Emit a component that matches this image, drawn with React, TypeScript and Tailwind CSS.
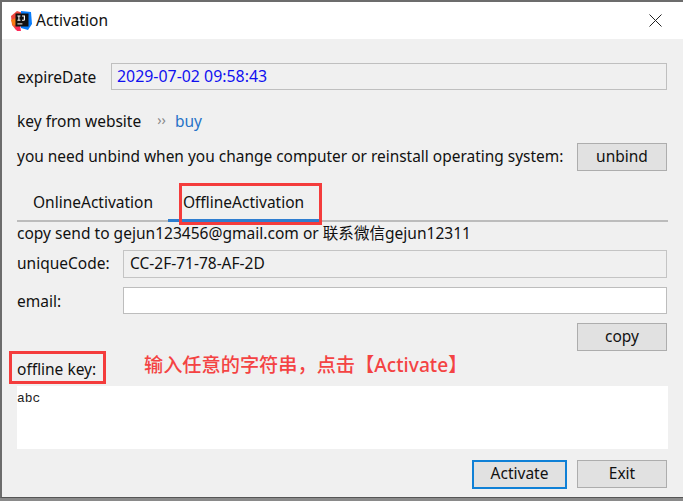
const font = { fontFamily: '"Noto Sans", "Noto Sans CJK SC", sans-serif' };

function IdeaLogo() {
  return (
    <svg width="22" height="22" viewBox="0 0 22 22" className="shrink-0">
      <path d="M0 6 L6 1 L12 3 L10 14 L5 20 L1 15 Z" fill="#f0483e" />
      <path d="M0 10 L5 8 L6 14 L2 16 Z" fill="#f97a12" />
      <path d="M10 1 L20 2 L21 14 L17 20 L10 18 Z" fill="#087cfa" />
      <path d="M4 18 L9 15 L10 21 L6 21 Z" fill="#fe2857" />
      <rect x="4.500" y="3.500" width="13" height="13" fill="#111" />
      <path d="M6.400 5.500h3v1h-1v3.200h1v1h-3v-1h1V6.500h-1z" fill="#fff" />
      <path d="M11 5.500h3v4.200q0 1-1.200 1H11v-1h1.800V6.500H11z" fill="#fff" />
      <rect x="6.400" y="13.400" width="5" height="1" fill="#fff" />
    </svg>
  );
}

function Btn({ label, focused }: { label: string; focused?: boolean }) {
  return (
    <button
      className={
        focused
          ? "w-[95px] h-[29px] pb-[1px] bg-[#e1e1e1] border-2 border-[#0f80d6] text-[15.5px] text-[#111] leading-none"
          : "w-[90px] h-[28px] pb-[1px] bg-[#e1e1e1] border border-[#adadad] text-[15.5px] text-[#111] leading-none"
      }
    >
      {label}
    </button>
  );
}

export default function App() {
  return (
    <div className="relative w-[683px] h-[501px] overflow-hidden bg-[#8a8a8a] text-[15.5px] text-[#111]" style={font}>
      <div className="flex flex-col h-[498px] border-t-2 border-l-2 border-[#6c6c6c] border-b border-b-[#555] bg-[#f0f0f0]">
        {/* Title bar */}
        <div className="flex items-center h-[37px] shrink-0 bg-white pl-[9px] pr-[21px]">
          <IdeaLogo />
          <span className="ml-[3px] text-[15.5px]">Activation</span>
          <svg width="13" height="13" viewBox="0 0 13 13" className="ml-auto" fill="none" stroke="#222" strokeWidth="1">
            <path d="M0.500 0.500 L12.500 12.500 M12.500 0.500 L0.500 12.500" />
          </svg>
        </div>

        <div className="flex flex-col flex-1 pl-[15px] pr-[16px]">
          {/* Expire date */}
          <div className="flex items-center mt-[24px] h-[27px]">
            <span className="w-[94px] pt-[2px]">expireDate</span>
            <div className="flex items-center flex-1 h-full pl-[5px] pt-[1px] border border-[#bfbfbf] text-[15.9px] text-[#1010f0]">
              2029-07-02 09:58:43
            </div>
          </div>

          {/* Website link */}
          <div className="flex items-center mt-[20px] h-[22px] pt-[2px]">
            <span>key from website</span>
            <span className="ml-[16px] -mt-[4px] text-[14px] text-[#888] leading-none">››</span>
            <span className="ml-[9px] text-[#2673c8]">buy</span>
          </div>

          {/* Unbind */}
          <div className="flex items-center justify-between mt-[11px] h-[28px]">
            <span className="text-[15.46px]">you need unbind when you change computer or reinstall operating system:</span>
            <Btn label="unbind" />
          </div>

          {/* Tabs */}
          <div className="flex items-end mt-[13px] h-[38px] border-b-2 border-[#bcbcbc] -mr-[1px]">
            <div className="flex items-center h-[38px] w-[151px] pl-[16px] -mb-[2px]">OnlineActivation</div>
            <div className="flex items-center h-[38px] w-[152px] pl-[15px] pt-[2px] -mb-[2px] border-b-[3px] border-[#2f7ed0]">
              OfflineActivation
            </div>
          </div>

          <div className="flex items-center h-[22px] pt-[2px] text-[15.55px]">copy send to gejun123456@gmail.com or 联系微信gejun12311</div>

          {/* Unique code */}
          <div className="flex items-center mt-[6px] h-[28px]">
            <span className="w-[106px]">uniqueCode:</span>
            <div className="flex items-center flex-1 h-full pl-[6px] border border-[#c4c4c4]">CC-2F-71-78-AF-2D</div>
          </div>

          {/* Email */}
          <div className="flex items-center mt-[9px] h-[27px]">
            <span className="w-[106px] pt-[2px]">email:</span>
            <div className="flex-1 h-full bg-white border border-[#bdbdbd]" />
          </div>

          <div className="flex justify-end mt-[9px]">
            <Btn label="copy" />
          </div>

          {/* Offline key */}
          <div className="flex items-end h-[35px]">
            <span className="w-[127px] leading-[20px] pb-[7px]">offline key:</span>
            <span className="text-[19.2px] leading-[24px] pb-[9px] font-medium text-[#f44343] whitespace-nowrap">
              输入任意的字符串，点击【Activate】
            </span>
          </div>

          <div className="h-[63px] -mr-[1px] bg-white pt-[4px] text-[13px] text-[#222] leading-[18px]" style={{ fontFamily: '"Liberation Mono", monospace' }}>
            abc
          </div>

          <div className="flex justify-end gap-[10px] mt-[11px]">
            <Btn label="Activate" focused />
            <Btn label="Exit" />
          </div>
        </div>
      </div>

      {/* Red annotation boxes */}
      <div className="absolute left-[179px] top-[183px] w-[143px] h-[42px] border-[3px] border-[#f43c3c]" />
      <div className="absolute left-[9px] top-[351px] w-[97px] h-[33px] border-[3px] border-[#f43c3c]" />
    </div>
  );
}
